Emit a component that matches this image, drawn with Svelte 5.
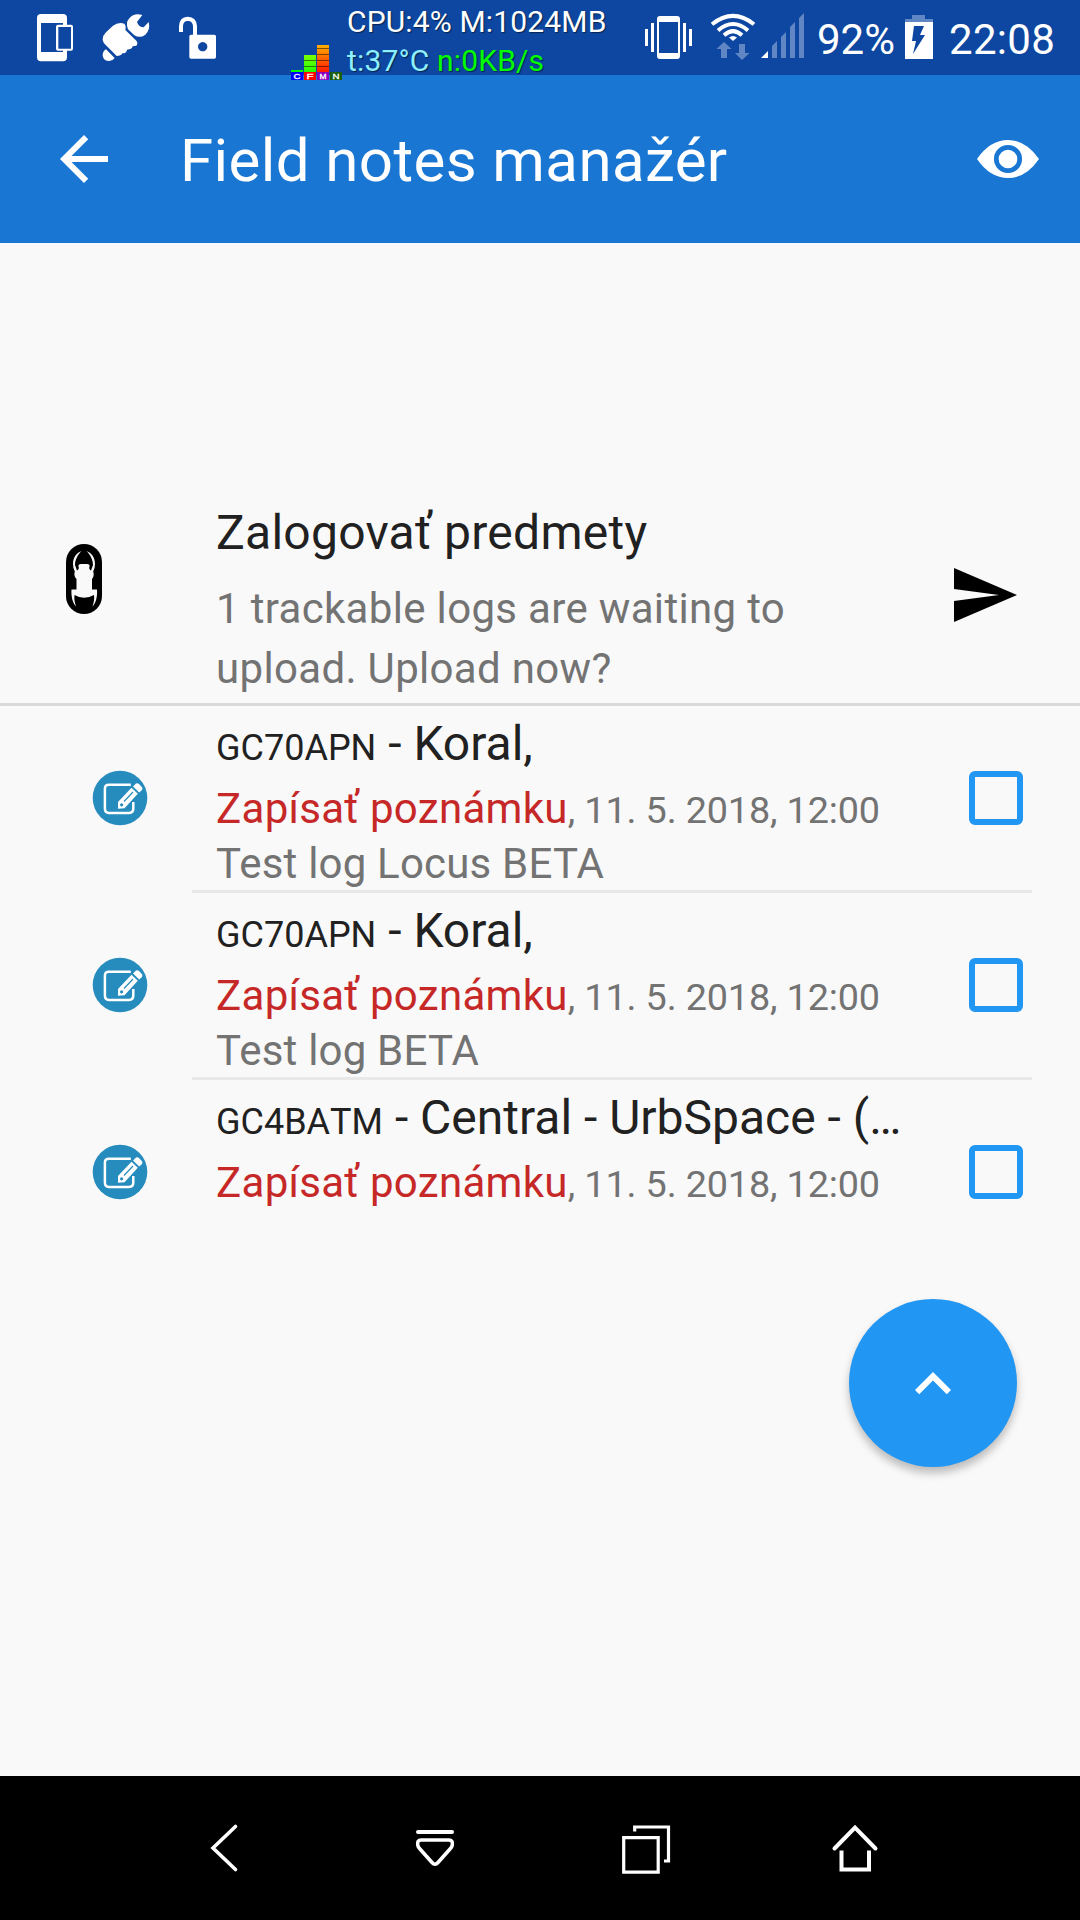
<script>
	const trackables = {
		title: 'Zalogovať predmety',
		text: '1 trackable logs are waiting to upload. Upload now?'
	};

	let notes = [
		{ code: 'GC70APN', name: 'Koral,', type: 'Zapísať poznámku', date: '11. 5. 2018, 12:00', text: 'Test log Locus BETA', checked: false },
		{ code: 'GC70APN', name: 'Koral,', type: 'Zapísať poznámku', date: '11. 5. 2018, 12:00', text: 'Test log BETA', checked: false },
		{ code: 'GC4BATM', name: 'Central - UrbSpace - (…', type: 'Zapísať poznámku', date: '11. 5. 2018, 12:00', text: '', checked: false }
	];

	// Load meter columns: x, letter, label colour
	const meter = [
		{ x: 291, letter: 'C', color: '#0000ff' },
		{ x: 304, letter: 'F', color: '#ff0000' },
		{ x: 317, letter: 'M', color: '#8800bb' },
		{ x: 330, letter: 'N', color: '#1b5e0b' }
	];

	function toggle(i) {
		notes[i].checked = !notes[i].checked;
	}
</script>

<div class="screen">
	<header class="status-bar">
		<svg width="88" height="75" viewBox="0 0 264 225">
			<path fill="#fff" fill-rule="evenodd" d="M123 42h66a12 12 0 0 1 12 12v20h12a6 6 0 0 1 6 6v66a6 6 0 0 1-6 6h-12v20a12 12 0 0 1-12 12h-66a12 12 0 0 1-12-12V54a12 12 0 0 1 12-12zM123 69v87h66v-4h-15a6 6 0 0 1-6-6V80a6 6 0 0 1 6-6h15v-5zM175 81v65h38V81z" />
		</svg>
		<svg width="76" height="75" viewBox="264 0 228 225">
			<g fill="#fff">
				<path d="M308 118Q308 107 318 97L339 77Q355 65 373 71Q379 77 376 90L409 122Q415 130 409 137L398 139Q396 149 381 149Q380 160 367 160Q363 168 350 168L312 130Q308 125 308 118z" />
				<path d="M318 148L344 174Q337 184 326 183Q308 182 308 165Q308 154 318 148z" />
				<path d="M427 45Q402 38 388 55Q376 68 384 88L403 106Q420 116 436 104Q452 88 446 66L431 82Q416 82 411 66z" />
			</g>
		</svg>
		<svg width="116" height="75" viewBox="492 0 348 225">
			<path fill="none" stroke="#fff" stroke-width="12" d="M543 96V78Q544 57 563 56Q584 57 585 78V108" />
			<path fill="#fff" fill-rule="evenodd" d="M573 104h70a5 5 0 0 1 5 5v62a5 5 0 0 1-5 5h-70a5 5 0 0 1-5-5v-62a5 5 0 0 1 5-5zM608 126a14 14 0 1 0 .1 0z" />
		</svg>
		<svg class="meter" width="67" height="80" viewBox="280 0 67 80">
			<defs>
				<linearGradient id="mem" x1="0" y1="0" x2="0" y2="1">
					<stop offset="0" stop-color="#ffb000" />
					<stop offset="1" stop-color="#ff1800" />
				</linearGradient>
				<linearGradient id="freq" x1="0" y1="0" x2="0" y2="1">
					<stop offset="0" stop-color="#7dff00" />
					<stop offset="1" stop-color="#22ff00" />
				</linearGradient>
			</defs>
			<rect x="291" y="70" width="12" height="2" fill="#0f0" />
			<rect x="304" y="55" width="12" height="17" fill="url(#freq)" />
			<rect x="317" y="45" width="12" height="27" fill="url(#mem)" />
			<path stroke="#000" stroke-opacity=".5" d="M304 60.5h12M304 66.5h12M317 48.5h12M317 54.5h12M317 60.5h12M317 66.5h12" />
			{#each meter as m}
				<rect x={m.x} y="72" width="12" height="8" fill={m.color} />
				<text class="meter-label" x={m.x + 2.5} y="79" textLength="7" lengthAdjust="spacingAndGlyphs">{m.letter}</text>
			{/each}
		</svg>
		<div class="stats">
			<div>CPU:4% M:1024MB</div>
			<div><span class="temp">t:37°C</span> <span class="net">n:0KB/s</span></div>
		</div>
		<svg width="60" height="75" viewBox="640 0 60 75">
			<path fill="#fff" fill-rule="evenodd" d="M645 29h3v17h-3zM651 23h3v29h-3zM683 23h3v29h-3zM689 29h3v17h-3zM660 16h17a3 3 0 0 1 3 3v37a3 3 0 0 1-3 3h-17a3 3 0 0 1-3-3V19a3 3 0 0 1 3-3zM659 22v31h19V22z" />
		</svg>
		<svg width="58" height="75" viewBox="700 0 58 75">
			<g fill="none" stroke="#fff" stroke-width="4">
				<path d="M712 24.3Q733 7.500 754 24.3" />
				<path d="M718 30.5Q733 17.5 748 30.5" />
				<path d="M724 35.3Q733 27 742 35.3" />
			</g>
			<path fill="#fff" d="M729 37.5Q733 34.5 737 37.5L733 41z" />
			<path fill="#6087c4" d="M724 42l7.500 7H727v9h-6v-9h-4.500zM739 44h6v9h4.500l-7.500 7-7-7h4z" />
		</svg>
		<svg width="60" height="75" viewBox="758 0 60 75">
			<path fill="#fff" d="M768 51v7h-7z" />
			<path fill="#6087c4" d="M772 46l5-5v17h-5zM781 37l5-5v26h-5zM790 27l5-5v36h-5zM799 18l5-5v45h-5z" />
		</svg>
		<span class="percent">92%</span>
		<svg width="45" height="75" viewBox="900 0 45 75">
			<path fill="#6087c4" d="M912 15h13v4h8v4h-28v-4h7z" />
			<path fill="#fff" fill-rule="evenodd" d="M905 22h28v37h-28zM914 26l-2 15h4l-3 13 12-19h-5l4-9z" />
		</svg>
		<span class="clock">22:08</span>
	</header>

	<div class="app-bar">
		<button class="icon-btn back" aria-label="Back">
			<svg width="72" height="72" viewBox="0 0 24 24">
				<path fill="#fff" d="M20 11H7.83l5.59-5.59L12 4l-8 8 8 8 1.41-1.41L7.83 13H20v-2z" />
			</svg>
		</button>
		<h1>Field notes manažér</h1>
		<button class="icon-btn eye" aria-label="View">
			<svg width="72" height="72" viewBox="0 0 72 72">
				<path fill="#fff" d="M5 36Q18 17 36 17Q54 17 67 36Q54 55 36 55Q18 55 5 36z" />
				<circle cx="36" cy="36" r="11.7" fill="#fff" stroke="#1976d2" stroke-width="4.7" />
			</svg>
		</button>
	</div>

	<section class="trackables">
		<svg class="bug" width="36" height="70" viewBox="66 544 36 70">
			<rect x="66" y="544" width="36" height="70" rx="18" />
			<path fill="#f9f9f9" d="M81.5 551C76 553 73 558 73 564Q73 568 74.8 571.5Q73.5 576 76.5 579V589.5H71.5C71 596 72.5 603 76 606.5C74.5 602 74 599 74.5 595Q84 600.5 94 595C94.5 599 94 602 92.5 606.5C96 603 97.5 596 97 589.5H92V579Q94.5 576 93.2 571.5Q95 568 95 564C95 558 92 553 86.5 551C90.5 555 93 560 93 565L91 570.5Q88.5 569 89.5 566.5Q90 564 87 564H81Q78 564 78.5 566.5Q79.5 569 77 570.5L75 565C75 560 77.5 555 81.5 551z" />
		</svg>
		<div class="trackables-text">
			<h2>{trackables.title}</h2>
			<p>{trackables.text}</p>
		</div>
		<button class="icon-btn send" aria-label="Send">
			<svg width="72" height="72" viewBox="0 0 24 24">
				<path d="M2.01 21L23 12 2.01 3 2 10l15 2-15 2z" />
			</svg>
		</button>
	</section>

	<ul class="notes">
		{#each notes as note, i}
			<li class="note">
				<svg class="note-icon" width="56" height="56" viewBox="92 770 56 56">
					<circle cx="120" cy="798" r="27.3" fill="#268cbd" />
					<path fill="none" stroke="#fff" stroke-width="2.5" d="M130.8 784.8H109Q104.9 784.8 104.9 788.5V808.5Q104.9 812.9 109 812.9H129Q133.3 812.9 133.3 808.5V802" />
					<path fill="#fff" d="M118 808.7V802L131.5 787.8L137.8 793.8L124.5 808.3zM133 786.5L136 783.5Q137.5 782.8 139 784L142 787.3Q143 789 141.8 790.3L139.2 792.5z" />
					<path fill="none" stroke="#268cbd" stroke-width="1.2" d="M124 801.5l9-9.5" />
					<circle cx="121.6" cy="804.8" r="1.6" fill="#268cbd" />
				</svg>
				<div class="note-body">
					<div class="note-title"><span class="code">{note.code}</span> - {note.name}</div>
					<div class="note-type">{note.type}<span class="date">, {note.date}</span></div>
					{#if note.text}
						<div class="note-text">{note.text}</div>
					{/if}
					<button class="checkbox" class:checked={note.checked} on:click={() => toggle(i)} aria-label="Select"></button>
				</div>
			</li>
		{/each}
	</ul>

	<button class="fab" aria-label="Expand">
		<svg width="72" height="72" viewBox="0 0 24 24">
			<path fill="#fff" d="M12 8l-6 6 1.41 1.41L12 10.83l4.59 4.58L18 14z" />
		</svg>
	</button>

	<nav class="nav-bar">
		<svg width="60" height="60" viewBox="194 1818 60 60">
			<path d="M235.500 1826.500L213 1848l22.500 21.500" stroke-width="3.6" stroke-linecap="round" />
		</svg>
		<svg width="60" height="60" viewBox="405 1818 60 60">
			<path d="M418 1832h34" stroke-width="4" stroke-linecap="round" />
			<path d="M421 1840h28Q453 1840 452.300 1845Q452 1847 450 1849L438 1862.500Q435 1866 432 1862.500L420 1849Q418 1847 417.700 1845Q417 1840 421 1840z" stroke-width="3.6" />
		</svg>
		<svg width="60" height="60" viewBox="616 1818 60 60">
			<path d="M623.700 1837.700h34.500v34.500h-34.500zM634.700 1831.500V1827h33.800v34h-4.500" stroke-width="3.2" />
		</svg>
		<svg width="60" height="60" viewBox="827 1818 60 60">
			<path d="M834.500 1848.500L855 1827.500l20.500 21" stroke-width="4" stroke-linecap="round" />
			<path d="M841.500 1850.500V1869.500h27.500V1850.500" stroke-width="4" />
		</svg>
	</nav>
</div>

<style>
	:global(body) {
		margin: 0;
		background: #f9f9f9;
	}

	.screen {
		display: flex;
		flex-direction: column;
		width: 1080px;
		height: 1920px;
		background: #f9f9f9;
		font-family: Roboto, sans-serif;
		color: #212121;
		overflow: hidden;
	}

	svg {
		display: block;
		flex-shrink: 0;
	}

	button {
		padding: 0;
		border: none;
		background: none;
		cursor: pointer;
	}

	.status-bar {
		display: flex;
		height: 75px;
		flex-shrink: 0;
		background: #0d47a1;
		color: #fff;
		white-space: nowrap;
	}

	.meter {
		position: relative;
		z-index: 1;
	}

	.meter-label {
		fill: #fff;
		stroke: #fff;
		stroke-width: 0.3px;
		font-family: "Liberation Sans", sans-serif;
		font-size: 8px;
	}

	.stats {
		width: 293px;
		padding-top: 2px;
		box-sizing: border-box;
		font-size: 30px;
		line-height: 39px;
		letter-spacing: 0.15px;
		text-shadow: 1px 1px 1px rgba(0, 0, 0, 0.5);
	}

	.temp {
		color: #8eefff;
	}

	.net {
		color: #00ff00;
	}

	.percent,
	.clock {
		font-size: 42px;
		line-height: 80px;
	}

	.percent {
		width: 83px;
		margin-left: -1px;
	}

	.clock {
		padding-left: 4px;
		letter-spacing: 0.3px;
	}

	.app-bar {
		display: flex;
		align-items: center;
		height: 168px;
		flex-shrink: 0;
		box-sizing: border-box;
		padding: 0 36px 0 48px;
		background: #1976d2;
		color: #fff;
	}

	h1 {
		flex: 1;
		margin: 4px 0 0 60px;
		font-size: 60px;
		font-weight: 400;
		line-height: 72px;
		letter-spacing: 0.4px;
	}

	.trackables {
		display: flex;
		height: 463px;
		flex-shrink: 0;
		box-sizing: border-box;
		padding: 260px 60px 0 66px;
		border-bottom: 3px solid #dadada;
	}

	.bug {
		margin-top: 41px;
	}

	.trackables-text {
		width: 610px;
		margin-left: 114px;
	}

	h2 {
		margin: 0;
		font-size: 48px;
		font-weight: 400;
		line-height: 60px;
		letter-spacing: 0.26px;
	}

	p {
		margin: 16px 0 0;
		font-size: 42px;
		line-height: 60px;
		letter-spacing: 0.33px;
		color: #737373;
	}

	.send {
		align-self: flex-start;
		margin: 56px 0 0 auto;
	}

	.notes {
		margin: 0;
		padding: 0;
		list-style: none;
	}

	.note {
		display: flex;
		padding: 0 48px 0 92px;
	}

	.note-icon {
		margin-top: 64px;
	}

	.note-body {
		display: grid;
		grid-template-columns: 1fr 54px;
		grid-template-rows: 75px 55px 54px;
		flex: 1;
		margin-left: 44px;
		padding: 0 9px 0 24px;
		border-bottom: 3px solid #e8e8e8;
		white-space: nowrap;
	}

	.note:last-child .note-body {
		border-bottom-color: transparent;
	}

	.note-title {
		grid-column: 1;
		padding-top: 8px;
		font-size: 48px;
		line-height: 60px;
	}

	.code {
		font-size: 36px;
		font-kerning: none;
	}

	.note-type,
	.note-text {
		grid-column: 1;
		font-size: 42px;
		line-height: 55px;
	}

	.note-type {
		letter-spacing: 0.31px;
		color: #c62828;
	}

	.date {
		font-size: 37.8px;
		letter-spacing: -0.15px;
		color: #737373;
	}

	.note-text {
		letter-spacing: 0.2px;
		color: #737373;
	}

	.checkbox {
		grid-column: 2;
		grid-row: 1 / 4;
		align-self: center;
		width: 54px;
		height: 54px;
		box-sizing: border-box;
		border: 6px solid #2196f3;
		border-radius: 6px;
	}

	.checkbox.checked {
		background: #2196f3;
	}

	.fab {
		display: flex;
		align-items: center;
		justify-content: center;
		align-self: flex-end;
		width: 168px;
		height: 168px;
		flex-shrink: 0;
		box-sizing: border-box;
		margin: 32px 63px 0 0;
		padding-top: 2px;
		border-radius: 50%;
		background: #2196f3;
		box-shadow: 0 6px 9px rgba(0, 0, 0, 0.25);
	}

	.nav-bar {
		display: flex;
		gap: 151px;
		height: 144px;
		flex-shrink: 0;
		box-sizing: border-box;
		margin-top: auto;
		padding: 42px 0 0 194px;
		background: #000;
		fill: none;
		stroke: #fff;
	}
</style>
